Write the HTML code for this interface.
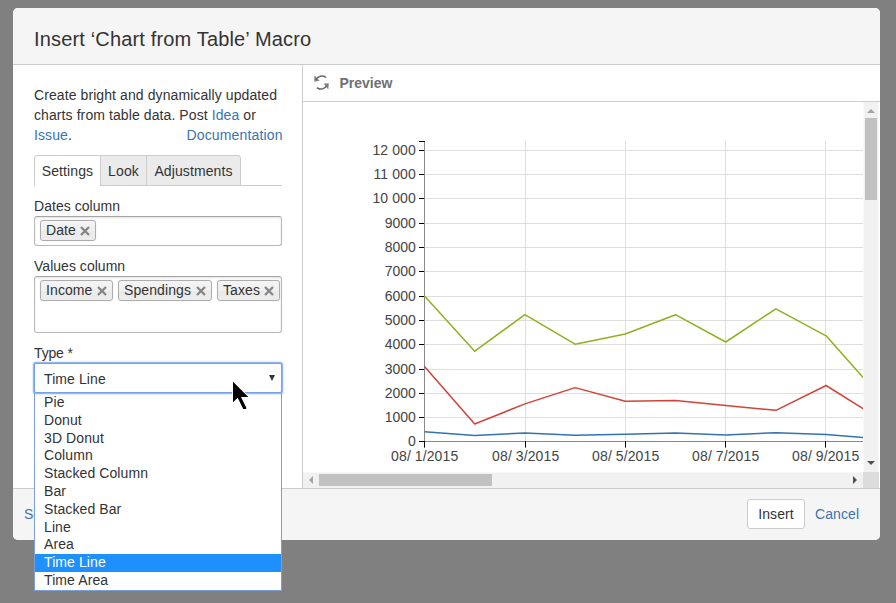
<!DOCTYPE html>
<html lang="en">
<head>
<meta charset="utf-8">
<title>Insert ‘Chart from Table’ Macro</title>
<style>
*{box-sizing:border-box;margin:0;padding:0}
html,body{width:896px;height:603px;overflow:hidden;background:#808080}
body{position:relative;font-family:"Liberation Sans",Arial,sans-serif;font-size:14px;line-height:20px;color:#333}
a{color:#3b73af;text-decoration:none}
.abs{position:absolute}
#dialog{position:absolute;left:13px;top:8px;width:867px;height:532px;background:#fff;border-radius:5px;overflow:hidden}
#hdr{position:absolute;left:0;top:0;width:867px;height:57px;background:#f5f5f5;border-bottom:1px solid #ccc}
#hdr h2{position:absolute;left:21px;top:16px;font-size:20px;line-height:30px;font-weight:normal;color:#333;white-space:nowrap;letter-spacing:.16px}
#left{position:absolute;left:0;top:57px;width:290px;height:423px;background:#fff;border-right:1px solid #ccc}
#desc{position:absolute;left:21px;top:20px;width:248px;line-height:20px}
#desc span,#desc a{position:absolute;white-space:nowrap;letter-spacing:.09px}
#tabs{position:absolute;left:21px;top:90px;width:248px;height:31px;border-bottom:1px solid #ccc}
#tabs span{position:absolute;top:0;height:31px;border:1px solid #ccc;background:#ebebeb;line-height:31px;text-align:center;letter-spacing:.1px}
#tabs span.on{background:#fff;border-bottom-color:#fff}
.l{position:absolute;left:21px;white-space:nowrap;line-height:16px;letter-spacing:.03px}
.box{position:absolute;left:21px;width:248px;border:1px solid #b8b8b8;border-top-color:#a5a5a5;border-radius:3px;background:#fff;box-shadow:inset 0 1px 2px rgba(0,0,0,.12)}
.tag{position:absolute;top:3px;height:21px;border:1px solid #adadad;border-radius:3px;background:linear-gradient(#f4f4f4 0%,#f0f0f0 50%,#eaeaea 52%,#ececec 100%);line-height:19px;white-space:nowrap;padding-left:5px;color:#333;letter-spacing:.1px;box-shadow:0 0 2px rgba(0,0,0,.08)}
.tag svg{position:absolute;right:4.8px;top:4.5px}
#sel{position:absolute;left:34px;top:363px;width:248px;height:30px;border:1px solid #74a1ea;border-radius:2px;background:#fff;box-shadow:0 0 1.5px 0.6px #7ba6ec;line-height:30px;padding-left:9px;letter-spacing:.1px;z-index:3}
#sel i{position:absolute;right:6px;top:11px;width:0;height:0;border-left:3.5px solid transparent;border-right:3.5px solid transparent;border-top:6px solid #333}
#right{position:absolute;left:290px;top:57px;width:577px;height:423px;background:#fff}
#phead{position:absolute;left:0;top:0;width:577px;height:37px;border-bottom:1px solid #ccc}
#phead b{position:absolute;left:36.5px;top:8px;color:#707070;font-size:14px;line-height:20px;letter-spacing:0}
#phead svg{position:absolute;left:11px;top:10px}
#chart{position:absolute;left:0;top:37px}
#vs{position:absolute;left:560px;top:37px;width:16px;height:370px;background:#f1f1f1;border-left:1px solid #f8f8f8;border-right:1px solid #f8f8f8}
#vs u{position:absolute;left:1px;top:16px;width:12px;height:82px;background:#c1c1c1}
#hs{position:absolute;left:0;top:407px;width:560px;height:16px;background:#f1f1f1;border-top:1px solid #f8f8f8}
#hs u{position:absolute;left:16px;top:1px;width:173px;height:12px;background:#c1c1c1}
#cor{position:absolute;left:560px;top:407px;width:16px;height:16px;background:#dcdcdc}
.ar{position:absolute;width:0;height:0;border:4px solid transparent}
#ftr{position:absolute;left:0;top:480px;width:867px;height:52px;background:#f5f5f5;border-top:1px solid #ccc}
#ins{position:absolute;left:734px;top:10px;width:58px;height:30px;border:1px solid #ccc;border-radius:3px;background:#fff;line-height:28px;text-align:center;color:#333;letter-spacing:.1px}
#can{position:absolute;left:802px;top:15px;letter-spacing:.1px}
#dd{position:absolute;left:34px;top:393px;width:248px;height:198px;background:#fff;border:1px solid #7b9ed6;border-top:none}
#dd div{position:absolute;left:0;width:246px;height:18px;line-height:18px;padding-left:9px;white-space:nowrap;letter-spacing:.1px}
#dd div.on{background:#1e90ff;color:#fff;line-height:16px}
#cur{position:absolute;left:231px;top:379px;z-index:5}
</style>
</head>
<body>
<div id="dialog">
  <div id="hdr"><h2>Insert ‘Chart from Table’ Macro</h2></div>
  <div id="left">
    <div id="desc">
      <span style="left:0;top:0">Create bright and dynamically updated</span>
      <span style="left:0;top:20px">charts from table data. Post <a style="position:static">Idea</a> or</span>
      <span style="left:0;top:40px"><a style="position:static">Issue</a>.</span>
      <a style="left:152.5px;top:40px;letter-spacing:.15px">Documentation</a>
    </div>
    <div id="tabs">
      <span class="on" style="left:0;width:67px;border-radius:3px 0 0 0">Settings</span>
      <span style="left:66px;width:47px">Look</span>
      <span style="left:112px;width:95px;border-radius:0 3px 0 0">Adjustments</span>
    </div>
    <span class="l" style="top:133px">Dates column</span>
    <div class="box" style="top:151px;height:30px"><span class="tag" style="left:5px;width:56px">Date<svg width="10" height="10" viewBox="0 0 10 10"><path d="M1 1L9 9M9 1L1 9" stroke="#858585" stroke-width="2.3" fill="none"/></svg></span></div>
    <span class="l" style="top:193px">Values column</span>
    <div class="box" style="top:211px;height:57px">
      <span class="tag" style="left:5px;width:73px">Income<svg width="10" height="10" viewBox="0 0 10 10"><path d="M1 1L9 9M9 1L1 9" stroke="#858585" stroke-width="2.3" fill="none"/></svg></span>
      <span class="tag" style="left:83px;width:94px">Spendings<svg width="10" height="10" viewBox="0 0 10 10"><path d="M1 1L9 9M9 1L1 9" stroke="#858585" stroke-width="2.3" fill="none"/></svg></span>
      <span class="tag" style="left:182px;width:63px">Taxes<svg width="10" height="10" viewBox="0 0 10 10"><path d="M1 1L9 9M9 1L1 9" stroke="#858585" stroke-width="2.3" fill="none"/></svg></span>
    </div>
    <span class="l" style="top:280px;letter-spacing:-.15px">Type *</span>
  </div>
  <div id="right">
    <div id="phead">
      <svg width="16" height="16" viewBox="0 0 16 16"><g fill="none" stroke="#686868" stroke-width="1.5" stroke-linecap="round"><path d="M11.56 2.1A6.6 6.6 0 0 0 2.2 4.4"/><path d="M3.44 13A6.6 6.6 0 0 0 12.8 10.7"/></g><g fill="#686868" opacity=".8"><path d="M0.4 0.3L0.2 6.7L5.6 5.7Z"/><path d="M9.6 8.4L14.8 8.2L14.3 14.6Z"/></g></svg>
      <b>Preview</b>
    </div>
    <svg id="chart" width="560" height="369" viewBox="0 0 560 369">
<path d="M121.5 315.5H560M121.5 291.5H560M121.5 267.5H560M121.5 242.5H560M121.5 218.5H560M121.5 194.5H560M121.5 169.5H560M121.5 145.5H560M121.5 121.5H560M121.5 96.5H560M121.5 72.5H560M121.5 48.5H560" stroke="#dedede" stroke-width="1" fill="none"/>
<path d="M222.5 39V339M322.5 39V339M422.5 39V339M522.5 39V339" stroke="#dedede" stroke-width="1" fill="none"/>
<path d="M121.5 39V339.5M121.5 339.5H560" stroke="#8a8a8a" stroke-width="1" fill="none"/>
<path d="M116 39.5H122M116 339.5H121M116 315.5H121M116 291.5H121M116 267.5H121M116 242.5H121M116 218.5H121M116 194.5H121M116 169.5H121M116 145.5H121M116 121.5H121M116 96.5H121M116 72.5H121M116 48.5H121M121.5 339V345.6M222.5 339V345.6M322.5 339V345.6M422.5 339V345.6M522.5 339V345.6" stroke="#000" stroke-width="1" fill="none"/>
<polyline points="121.5,329.7 171.7,333.6 221.9,330.9 272.1,333.2 322.3,332.2 372.5,331.0 422.7,333.0 472.9,330.7 523.1,332.4 573.3,336.7" stroke="#3572b0" stroke-width="1.5" fill="none" stroke-linejoin="round"/>
<polyline points="121.5,264.4 171.7,322.0 221.9,301.9 272.1,285.6 322.3,299.2 372.5,298.5 422.7,303.6 472.9,308.3 523.1,283.5 573.3,315.1" stroke="#d04437" stroke-width="1.5" fill="none" stroke-linejoin="round"/>
<polyline points="121.5,194.0 171.7,249.2 221.9,212.7 272.1,242.2 322.3,232.0 372.5,212.7 422.7,240.0 472.9,206.8 523.1,233.8 573.3,290.3" stroke="#8eb021" stroke-width="1.5" fill="none" stroke-linejoin="round"/>
<g font-family="'Liberation Sans',Arial,sans-serif" font-size="14" fill="#444">
<text x="112.80000000000001" y="343.7" text-anchor="end">0</text>
<text x="112.80000000000001" y="319.7" text-anchor="end">1000</text>
<text x="112.80000000000001" y="295.7" text-anchor="end">2000</text>
<text x="112.80000000000001" y="271.7" text-anchor="end">3000</text>
<text x="112.80000000000001" y="246.7" text-anchor="end">4000</text>
<text x="112.80000000000001" y="222.7" text-anchor="end">5000</text>
<text x="112.80000000000001" y="198.7" text-anchor="end">6000</text>
<text x="112.80000000000001" y="173.7" text-anchor="end">7000</text>
<text x="112.80000000000001" y="149.7" text-anchor="end">8000</text>
<text x="112.80000000000001" y="125.7" text-anchor="end">9000</text>
<text x="112.80000000000001" y="100.7" text-anchor="end" letter-spacing="0.1">10 000</text>
<text x="112.80000000000001" y="76.7" text-anchor="end" letter-spacing="0.1">11 000</text>
<text x="112.80000000000001" y="52.7" text-anchor="end" letter-spacing="0.1">12 000</text>
<text x="121.7" y="359" text-anchor="middle" letter-spacing="0.1" xml:space="preserve">08/ 1/2015</text>
<text x="222.7" y="359" text-anchor="middle" letter-spacing="0.1" xml:space="preserve">08/ 3/2015</text>
<text x="322.7" y="359" text-anchor="middle" letter-spacing="0.1" xml:space="preserve">08/ 5/2015</text>
<text x="422.7" y="359" text-anchor="middle" letter-spacing="0.1" xml:space="preserve">08/ 7/2015</text>
<text x="522.7" y="359" text-anchor="middle" letter-spacing="0.1" xml:space="preserve">08/ 9/2015</text>
</g></svg>
    <div id="vs"><span class="ar" style="left:3px;top:7px;border-width:0 4px 4px 4px;border-bottom-color:#a3a3a3"></span><u></u><span class="ar" style="left:3px;top:359px;border-width:4px 4px 0 4px;border-top-color:#505050"></span></div>
    <div id="hs"><span class="ar" style="left:6px;top:3px;border-width:4px 4.3px 4px 0;border-right-color:#a3a3a3"></span><u></u><span class="ar" style="left:550px;top:3px;border-width:4px 0 4px 4.3px;border-left-color:#505050"></span></div>
    <div id="cor"></div>
  </div>
  <div id="ftr"><a class="abs" style="left:11px;top:15px;white-space:nowrap">Select macro</a><span id="ins">Insert</span><a id="can">Cancel</a></div>
</div>
<div id="sel">Time Line<i></i></div>
<div id="dd">
<div style="top:0">Pie</div><div style="top:18px">Donut</div><div style="top:36px">3D Donut</div><div style="top:53px">Column</div><div style="top:71px">Stacked Column</div><div style="top:89px">Bar</div><div style="top:107px">Stacked Bar</div><div style="top:125px">Line</div><div style="top:142px">Area</div><div class="on" style="top:161px">Time Line</div><div style="top:178px">Time Area</div>
</div>
<svg id="cur" width="22" height="32" viewBox="231 379 22 32"><path d="M233 381.8V402.2L237.7 397.8L243.2 409H246.2V407.6L241 397H248.3Z" fill="#000" stroke="#fff" stroke-width="1.6" stroke-linejoin="miter" paint-order="stroke"/></svg>
</body>
</html>
